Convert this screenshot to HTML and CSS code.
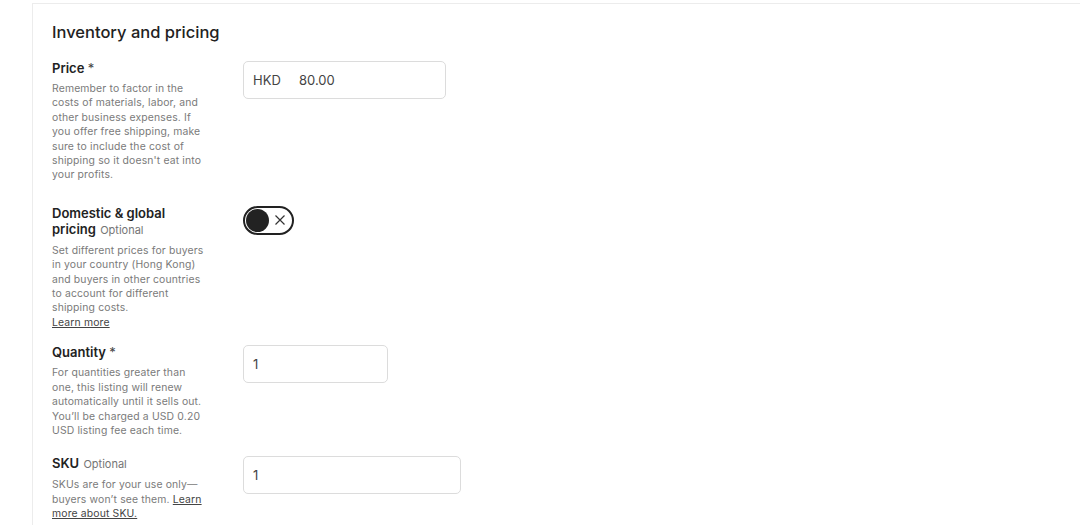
FILE: index.html
```html
<!DOCTYPE html>
<html lang="en">
<head>
<meta charset="utf-8">
<title>Inventory and pricing</title>
<link rel="stylesheet" href="styles.css">
</head>
<body>
<section class="card">
  <h2 class="title">Inventory and pricing</h2>

  <div class="row row-price">
    <div class="info">
      <div class="label">Price <span class="req">*</span></div>
      <p class="desc">Remember to factor in the costs of materials, labor, and other business expenses. If you offer free shipping, make sure to include the cost of shipping so it doesn't eat into your profits.</p>
    </div>
    <div class="field">
      <div class="input input-price"><span class="prefix">HKD</span><span>80.00</span></div>
    </div>
  </div>

  <div class="row row-domestic">
    <div class="info">
      <div class="label">Domestic &amp; global pricing <span class="opt">Optional</span></div>
      <p class="desc">Set different prices for buyers in your country (Hong Kong) and buyers in other countries to account for different shipping costs.<br><a class="link" href="#">Learn more</a></p>
    </div>
    <div class="field">
      <div class="toggle">
        <span class="knob"></span>
        <svg class="x" width="12" height="12" viewBox="0 0 12 12"><path d="M1.5 1.5 L10.5 10.5 M10.5 1.5 L1.5 10.5" stroke="#333" stroke-width="1.2" fill="none"/></svg>
      </div>
    </div>
  </div>

  <div class="row row-qty">
    <div class="info">
      <div class="label">Quantity <span class="req">*</span></div>
      <p class="desc">For quantities greater than one, this listing will renew automatically until it sells out. You’ll be charged a USD 0.20 USD listing fee each time.</p>
    </div>
    <div class="field">
      <div class="input input-qty"><span>1</span></div>
    </div>
  </div>

  <div class="row row-sku">
    <div class="info">
      <div class="label">SKU <span class="opt">Optional</span></div>
      <p class="desc">SKUs are for your use only—buyers won’t see them. <a class="link" href="#">Learn more about SKU.</a></p>
    </div>
    <div class="field">
      <div class="input input-sku"><span>1</span></div>
    </div>
  </div>
</section>
</body>
</html>
```

FILE: styles.css
```css
* { box-sizing: border-box; }
html, body { margin: 0; padding: 0; background: #fff; }
body {
  font-family: Inter, "Liberation Sans", sans-serif;
  color: #222;
  overflow: hidden;
  height: 525px;
}
.card {
  margin: 3px 0 0 32px;
  border: 1px solid #ececec;
  border-right: none;
  border-bottom: none;
  padding: 16px 0 0 19px;
  height: 522px;
  overflow: hidden;
}
.title {
  margin: 0 0 16px;
  font-size: 16.5px;
  line-height: 24px;
  font-weight: 500;
  color: #222;
}
.row {
  display: grid;
  grid-template-columns: 156px 1fr;
  column-gap: 35px;
}
.row-price { margin-bottom: 22px; }
.row-domestic { margin-bottom: 14px; }
.row-qty { margin-bottom: 17px; }
.label {
  font-size: 13px;
  line-height: 16px;
  font-weight: 600;
  color: #222;
}
.req { font-weight: 400; color: #444; }
.opt { font-size: 11px; line-height: 16px; font-weight: 400; color: #757575; margin-left: 1px; }
.desc {
  margin: 6px 0 0;
  font-size: 10.4px;
  line-height: 14.4px;
  color: #7a7a7a;
  letter-spacing: 0.15px;
}
.link { color: #444; text-decoration: underline; }
.field { padding-top: 1px; }
.input {
  height: 38px;
  border: 1px solid #dcdcdc;
  border-radius: 5px;
  display: flex;
  align-items: center;
  padding: 0 9px;
  font-size: 13px;
  color: #444;
  background: #fff;
}
.prefix { width: 46px; }
.input-price { width: 203px; }
.input-qty { width: 145px; }
.input-sku { width: 218px; }
.toggle {
  width: 51px;
  height: 29px;
  border: 2px solid #222;
  border-radius: 15px;
  display: flex;
  align-items: center;
  padding-left: 1px;
  gap: 5px;
}
.knob {
  width: 23px;
  height: 23px;
  border-radius: 50%;
  background: #222;
}
```
